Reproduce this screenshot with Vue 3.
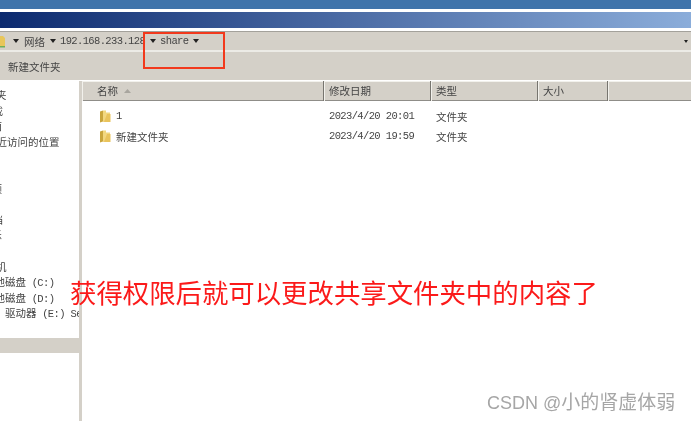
<script setup>
const sidebarRows = [
  { text: '收藏夹', shift: -25 },
  { text: '下载', shift: -18 },
  { text: '桌面', shift: -19 },
  { text: '最近访问的位置', shift: -14 },
  { text: '' },
  { text: '' },
  { text: '视频', shift: -19 },
  { text: '图片', shift: -20 },
  { text: '文档', shift: -18 },
  { text: '音乐', shift: -19 },
  { text: '' },
  { text: '计算机', shift: -25 },
  { text: '本地磁盘', latin: ' (C:)', shift: -16 },
  { text: '本地磁盘', latin: ' (D:)', shift: -16 },
  { text: '驱动器', latin: ' (E:) Se', shift: 5 }
]

const columns = ['名称', '修改日期', '类型', '大小', '']

const files = [
  { name: '1', date: '2023/4/20 20:01', type: '文件夹' },
  { name: '新建文件夹', date: '2023/4/20 19:59', type: '文件夹' }
]
</script>

<template>
  <div class="page">
    <div class="top-stripe"></div>
    <div class="title-bar"></div>

    <div class="address-bar">
      <svg class="crumb-folder" width="6" height="14" viewBox="0 0 6 14">
        <path d="M-6 2h9l2 2v9H-6z" fill="#e8c65a" />
        <path d="M0 12h5v1.500H0z" fill="#6fae5a" />
      </svg>
      <span class="arrow first"></span>
      <span class="crumb">网络</span>
      <span class="arrow"></span>
      <span class="crumb mono">192.168.233.128</span>
      <span class="arrow"></span>
      <span class="crumb mono">share</span>
      <span class="arrow"></span>
      <span class="arrow end"></span>
    </div>

    <div class="toolbar">新建文件夹</div>

    <div class="body">
      <aside class="sidebar">
        <div class="tree">
          <div v-for="(row, i) in sidebarRows" :key="i" class="tree-row">
            <span :style="{ marginLeft: (row.shift || 0) + 'px' }">{{ row.text }}<span v-if="row.latin" class="mono">{{ row.latin }}</span></span>
          </div>
        </div>
        <div class="sidebar-scroll"></div>
      </aside>
      <div class="splitter"></div>

      <main class="list">
        <div class="list-head">
          <div v-for="(col, i) in columns" :key="i" class="head-cell">
            {{ col }}
            <svg v-if="i === 0" class="sort" width="7" height="4" viewBox="0 0 7 4"><path d="M3.500 0 7 4H0z" fill="#a8a59e" /></svg>
          </div>
        </div>
        <div class="rows">
          <div v-for="file in files" :key="file.name" class="file-row">
            <div class="name-cell">
              <svg class="folder" width="12" height="13" viewBox="0 0 12 13">
                <path d="M1 1.500 4 .5v11l-3 1z" fill="#c9a53c" />
                <path d="M4 .5h3v2h4v9.500H4z" fill="#f2d780" />
                <path d="M5 12 8 4h3.500v8z" fill="#e9c35c" />
              </svg>
              <span :class="{ mono: file.name === '1' }">{{ file.name }}</span>
            </div>
            <div class="mono date">{{ file.date }}</div>
            <div class="type">{{ file.type }}</div>
          </div>
        </div>
      </main>
    </div>

    <div class="red-box"></div>
    <div class="caption">获得权限后就可以更改共享文件夹中的内容了</div>
    <div class="watermark"><span class="mark-latin">CSDN @</span>小的肾虚体弱</div>
  </div>
</template>

<style scoped>
.page {
  position: relative;
  width: 691px;
  height: 421px;
  overflow: hidden;
  background: #fff;
  color: #444;
  font-family: "Noto Sans CJK SC", "Liberation Sans", sans-serif;
  font-size: 10.5px;
  filter: blur(0.4px);
}

.mono {
  font-family: "Liberation Mono", "Noto Sans CJK SC", monospace;
  font-size: 10.5px;
  letter-spacing: -0.63px;
}

.top-stripe {
  height: 9px;
  background: #3f74ab;
}

.title-bar {
  height: 16px;
  margin-top: 3px;
  background: linear-gradient(90deg, #0c2a6f, #8badda);
}

.address-bar {
  display: flex;
  align-items: center;
  height: 18px;
  margin-top: 3px;
  border-top: 1px solid #a3a19b;
  border-bottom: 2px solid #ecebe6;
  background: #d4d0c8;
}

.crumb-folder {
  flex: none;
}

.arrow {
  flex: none;
  width: 0;
  height: 0;
  margin: 0 4px 0 5px;
  border-top: 4px solid #222;
  border-left: 3px solid transparent;
  border-right: 3px solid transparent;
}

.arrow.first {
  margin: 0 5px 0 7px;
}

.arrow.end {
  margin-left: auto;
  margin-right: 3px;
  border-top-width: 3px;
  border-left-width: 2.500px;
  border-right-width: 2.500px;
}

.crumb {
  white-space: nowrap;
}

.toolbar {
  height: 28px;
  padding-left: 8px;
  line-height: 29px;
  background: #d4d0c8;
}

.body {
  display: flex;
  height: 340px;
  margin-top: 1px;
}

.sidebar {
  flex: none;
  width: 79px;
  overflow: hidden;
}

.tree {
  height: 252px;
  padding-top: 6px;
  box-sizing: border-box;
}

.tree-row {
  height: 15.600px;
  line-height: 15.600px;
  white-space: nowrap;
}

.sidebar-scroll {
  height: 15px;
  margin-top: 5px;
  background: #d4d0c8;
}

.splitter {
  flex: none;
  width: 3px;
  background: #d4d0c8;
}

.list {
  flex: 1;
}

.list-head {
  display: grid;
  grid-template-columns: 242px 107px 107px 70px 1fr;
  height: 19px;
  line-height: 20px;
  border-bottom: 1px solid #8f8d88;
  background: #d4d0c8;
}

.head-cell {
  display: flex;
  align-items: center;
  gap: 6px;
  padding-left: 5px;
  border-right: 1px solid #77756f;
  box-shadow: inset 1px 1px 0 #f2f1ec;
}

.head-cell:first-child {
  padding-left: 15px;
}

.head-cell:last-child {
  border-right: none;
}

.rows {
  padding-top: 5px;
}

.file-row {
  display: grid;
  grid-template-columns: 247px 107px 1fr;
  align-items: center;
  height: 20px;
}

.name-cell {
  display: flex;
  align-items: center;
  gap: 5px;
  padding-left: 17px;
}

.red-box {
  position: absolute;
  left: 143px;
  top: 32px;
  width: 78px;
  height: 33px;
  border: 2px solid #f2391c;
}

.caption {
  position: absolute;
  left: 70px;
  top: 274px;
  font-size: 26.400px;
  line-height: 36px;
  color: #fb1a1a;
  white-space: nowrap;
}

.watermark {
  position: absolute;
  left: 487px;
  top: 389px;
  font-size: 19px;
  line-height: 24px;
  color: #a6a6a6;
  white-space: nowrap;
}

.mark-latin {
  font-family: "Liberation Sans", sans-serif;
  font-size: 18px;
}
</style>
